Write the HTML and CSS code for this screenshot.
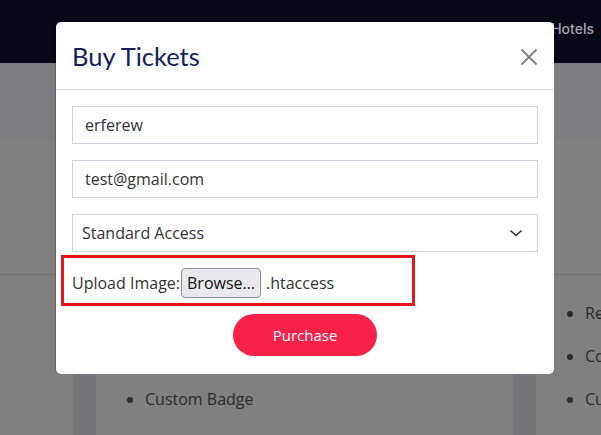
FILE: index.html
```html
<!DOCTYPE html>
<html lang="en">
<head>
<meta charset="utf-8">
<title>Buy Tickets</title>
<link rel="stylesheet" href="styles.css">
</head>
<body>
<header class="navbar">
  <nav class="nav"><a class="nav-link" href="#">Hotels</a></nav>
</header>
<section class="hero"></section>
<section class="intro"></section>
<section class="pricing">
  <div class="col-left">
    <div class="card">
      <ul class="features">
        <li>Regular Seating</li>
        <li>Coffee Break</li>
        <li>Custom Badge</li>
      </ul>
    </div>
  </div>
  <div class="col-right">
    <ul class="features">
      <li>Regular Seating</li>
      <li>Coffee Break</li>
      <li>Custom Badge</li>
    </ul>
  </div>
</section>

<div class="modal">
  <div class="modal-header">
    <h2 class="modal-title">Buy Tickets</h2>
    <button class="close" aria-label="Close">
      <svg width="18" height="18" viewBox="0 0 18 18"><path d="M1.5 1.5 L16.5 16.5 M16.5 1.5 L1.5 16.5" stroke="#808080" stroke-width="1.8" fill="none"/></svg>
    </button>
  </div>
  <form class="modal-body">
    <div class="field">erferew</div>
    <div class="field">test@gmail.com</div>
    <div class="field select">
      <span>Standard Access</span>
      <svg width="14" height="8" viewBox="0 0 14 8"><path d="M1.5 1.5 L7 6.5 L12.5 1.5" stroke="#343a40" stroke-width="1.6" fill="none"/></svg>
    </div>
    <div class="upload">
      <span class="upload-label">Upload Image:</span><span class="browse">Browse…</span><span class="filename">.htaccess</span>
    </div>
    <div class="actions">
      <button type="button" class="purchase">Purchase</button>
    </div>
  </form>
</div>
</body>
</html>
```
FILE: styles.css
```css
* { box-sizing: border-box; }
html, body { margin: 0; padding: 0; }
body {
  width: 601px;
  height: 435px;
  overflow: hidden;
  background: #808080;
  font-family: "Open Sans", "Noto Sans", sans-serif;
  position: relative;
}
.navbar {
  height: 63px;
  background: #060816;
  display: flex;
  justify-content: flex-end;
  padding-right: 7px;
}
.nav { display: flex; align-items: center; height: 57px; }
.nav-link {
  color: #a4a5ab;
  text-decoration: none;
  font-size: 14px;
  font-family: "Inter", "Open Sans", sans-serif;
  font-weight: 500;
}
.hero { height: 75px; background: #7c7d81; }
.intro { height: 137px; background: #808080; border-bottom: 1px solid #6e6e6e; }
.pricing {
  display: grid;
  grid-template-columns: 73px 463px 1fr;
  height: 160px;
}
.col-left {
  grid-column: 2;
  background: #77777b;
  padding: 0 23px;
}
.card { background: #808080; height: 100%; padding-left: 24px; }
.col-right { grid-column: 3; padding-left: 24px; white-space: nowrap; overflow: hidden; }
.features {
  margin: 0;
  padding: 26px 0 0 25px;
  color: #2a2a2a;
  font-size: 16px;
  list-style: disc;
}
.features li { line-height: 24px; margin-bottom: 19px; white-space: nowrap; }

.modal {
  position: absolute;
  left: 56px;
  top: 22px;
  width: 498px;
  background: #fff;
  border-radius: 5px;
  box-shadow: -1px 0 1px rgba(0,0,0,0.25);
}
.modal-header {
  height: 68px;
  padding: 0 16px;
  border-bottom: 1px solid #dee2e6;
  display: flex;
  align-items: center;
  justify-content: space-between;
}
.modal-title {
  margin: 0;
  font-family: "Lato", "Open Sans", sans-serif;
  font-weight: 400;
  font-size: 25.5px;
  color: #15225a;
  line-height: 36px;
  padding-top: 1px;
}
.close {
  border: 0;
  background: none;
  padding: 0;
  width: 18px;
  height: 18px;
  display: flex;
  margin-top: 2px;
}
.modal-body { padding: 16px 16px 18px; }
.field {
  height: 38px;
  border: 1px solid #ced4da;
  padding: 0 12px;
  display: flex;
  align-items: center;
  font-size: 16px;
  color: #333;
  margin-bottom: 16px;
}
.field.select {
  padding: 0 14px 0 9px;
  justify-content: space-between;
  margin-bottom: 3px;
}
.upload {
  width: 354px;
  margin-left: -11px;
  border: 3px solid #e3161d;
  padding: 10px 8px 5px;
  display: flex;
  align-items: center;
  font-size: 16px;
  color: #333;
  height: 51px;
}
.upload-label { margin-right: 1px; }
.browse {
  height: 30px;
  width: 80px;
  border: 1px solid #8f8f9d;
  background: #e9e9ed;
  border-radius: 4px;
  display: flex;
  align-items: center;
  justify-content: center;
  color: #111;
}
.filename { margin-left: 5px; }
.actions { display: flex; justify-content: center; margin-top: 8px; }
.purchase {
  width: 144px;
  height: 42px;
  border: 0;
  border-radius: 21px;
  background: #f82249;
  color: #fff;
  font-family: "Open Sans", sans-serif;
  font-size: 15px;
}
```
